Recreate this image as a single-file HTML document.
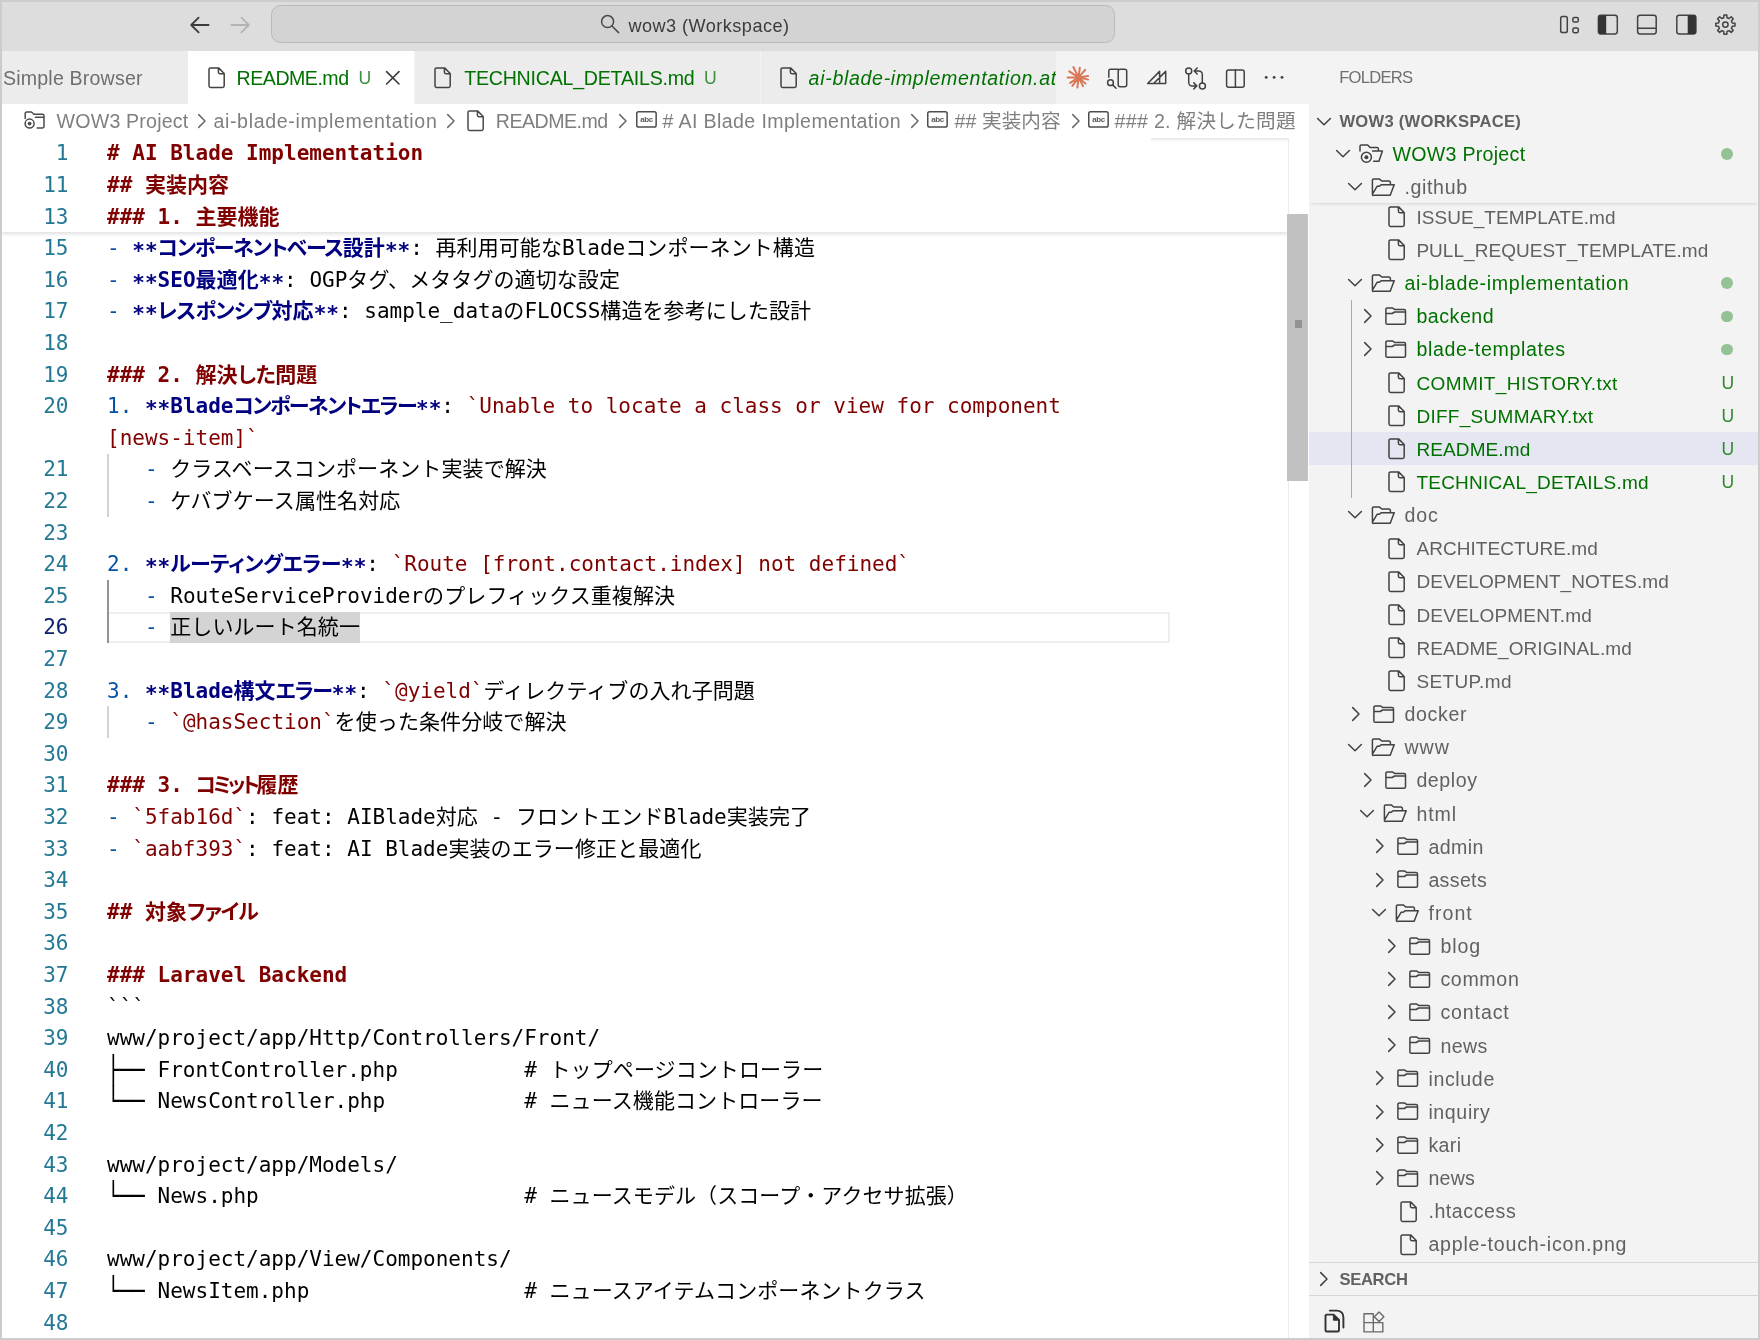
<!DOCTYPE html>
<html lang="ja"><head><meta charset="utf-8"><title>wow3 (Workspace)</title>
<style>
*{box-sizing:border-box;margin:0;padding:0}
html,body{width:1760px;height:1340px;overflow:hidden;background:#cccccc}
body{position:relative;font-family:"Liberation Sans", "Noto Sans CJK JP", sans-serif;color:#616161}
#win{will-change:transform;position:absolute;left:2px;top:2px;width:1756px;height:1336px;background:#fff;overflow:hidden}
#title{position:absolute;left:0;top:0;width:1756px;height:49px;background:#dddddd}
#cmd{position:absolute;left:269px;top:3.2px;width:844.2px;height:37.8px;border:1.5px solid #b9b9b9;border-radius:9.5px;background:#d3d3d3}
#cmdtxt{position:absolute;left:0;top:0;width:100%;height:100%;line-height:36px;font-size:18.1px;color:#3b3b3b;white-space:nowrap}
#tabs{position:absolute;left:0;top:49px;width:1306.5px;height:52.8px;background:#f3f3f3}
.tab{position:absolute;top:0;height:52.8px;background:#ececec;white-space:nowrap;font-size:19.6px;line-height:52.5px;color:#007100}
.tab.active{background:#fff}
.tab span{position:absolute;top:1px;white-space:pre}
#crumbs{position:absolute;left:0;top:101.8px;width:1306.5px;height:33.7px;background:#fff;font-size:19.6px;line-height:34px;color:#7f7f7f;white-space:nowrap}
#crumbs span{position:absolute;top:0;white-space:pre}
#side{position:absolute;left:1306.5px;top:49px;width:449.5px;height:1287px;background:#f3f3f3;overflow:hidden}
#editor{position:absolute;left:0;top:135.5px;width:1306.5px;height:1201px;background:#fff;overflow:hidden;font-family:"DejaVu Sans Mono", "Liberation Mono", "Noto Sans CJK JP", monospace;font-size:21.0px}
.ln{position:absolute;left:0;width:66.5px;text-align:right;color:#237893;height:31.6px;line-height:31.6px;white-space:pre}
.ln.cur{color:#0b216f}
.cl{position:absolute;left:105.0px;height:31.6px;line-height:31.6px;white-space:pre;color:#000}
.h{color:#800000;font-weight:bold}
.b{color:#000080;font-weight:bold}
.p{color:#0451a5}
.c{color:#800000}
.j{letter-spacing:0.09px}
.as{position:relative;top:3px}
.bx{display:inline-block;transform:scaleY(1.265);transform-origin:50% 16.2px}
.row{position:absolute;left:0;width:450px;height:33.15px;line-height:33px;font-size:19.6px;white-space:nowrap;color:#616161}
.row span{position:absolute;top:1px;white-space:pre}
.row.g{color:#007100}
.hd{position:absolute;left:0;width:450px;height:33px;line-height:33px;font-size:16.6px;font-weight:bold;color:#616161;white-space:nowrap}
.hd span{position:absolute;top:0.5px;white-space:pre}
svg{position:absolute;overflow:visible}
.i{fill:none;stroke:#424242;stroke-width:1.5;stroke-linejoin:round;stroke-linecap:round}
</style></head>
<body>
<div id="win">
<div id="title">
<svg style="left:187.0px;top:13.0px" width="22" height="20"><path d="M19.6 10H2.6M9.6 2.6L2.2 10L9.6 17.4" fill="none" stroke="#3b3b3b" stroke-width="1.8" stroke-linecap="round" stroke-linejoin="round"/></svg>
<svg style="left:226.5px;top:13.0px" width="22" height="20"><path d="M2.4 10H19.4M12.4 2.6L19.8 10L12.4 17.4" fill="none" stroke="#b4b4b4" stroke-width="1.8" stroke-linecap="round" stroke-linejoin="round"/></svg>
<div id="cmd"><div id="cmdtxt"><svg style="left:327.8px;top:8.0px" width="22" height="22"><circle cx="7.6" cy="7.6" r="6" fill="none" stroke="#4a4a4a" stroke-width="1.5"/><path d="M12 12L18.6 18.6" stroke="#4a4a4a" stroke-width="1.5" stroke-linecap="round"/></svg><span style="position:absolute;left:356.5px;top:1.5px;letter-spacing:0.466px">wow3 (Workspace)</span></div></div>
<svg style="left:0;top:0" width="1756" height="49"><rect class="i" x="1558.7" y="14.6" width="6.6" height="16.0" rx="1.8" /><rect class="i" x="1570.9" y="15.4" width="5.4" height="4.7" rx="1.4" /><rect class="i" x="1570.9" y="26.0" width="5.4" height="4.7" rx="1.4" /><rect class="i" x="1596.4" y="13.2" width="18.9" height="18.8" rx="2.4" /><path d="M1598.8 13.2h5.4v18.8h-5.4a2.4 2.4 0 0 1 -2.4 -2.4v-14a2.4 2.4 0 0 1 2.4 -2.4z" fill="#333"/><rect class="i" x="1635.6" y="13.2" width="18.6" height="18.8" rx="2.4" /><path class="i" d="M1635.6 26.3h18.6"/><rect class="i" x="1674.8" y="13.2" width="19.1" height="18.8" rx="2.4" /><path d="M1685.7 13.2h5.8a2.4 2.4 0 0 1 2.4 2.4v14a2.4 2.4 0 0 1 -2.4 2.4h-5.8z" fill="#333"/><path class="i" d="M1721.74 15.70 L1721.97 13.01 L1724.83 13.01 L1725.06 15.70 L1727.11 16.55 L1729.17 14.80 L1731.20 16.83 L1729.45 18.89 L1730.30 20.94 L1732.99 21.17 L1732.99 24.03 L1730.30 24.26 L1729.45 26.31 L1731.20 28.37 L1729.17 30.40 L1727.11 28.65 L1725.06 29.50 L1724.83 32.19 L1721.97 32.19 L1721.74 29.50 L1719.69 28.65 L1717.63 30.40 L1715.60 28.37 L1717.35 26.31 L1716.50 24.26 L1713.81 24.03 L1713.81 21.17 L1716.50 20.94 L1717.35 18.89 L1715.60 16.83 L1717.63 14.80 L1719.69 16.55Z"/><circle class="i" cx="1723.4" cy="22.6" r="2.7"/></svg>
</div>
<div id="tabs">
<div class="tab" style="left:0;width:185.5px;color:#6e6e6e"><span style="left:1.0px;letter-spacing:0.177px">Simple Browser</span></div>
<div class="tab active" style="left:185.5px;width:226.2px"></div>
<div class="tab" style="left:412.7px;width:345.3px"></div>
<div class="tab" style="left:759px;width:294.6px"></div>
<div class="tab" style="left:0;width:1053.6px;background:none;overflow:hidden"><svg style="left:205.60px;top:15.95px" width="18" height="22"><path class="i" style="stroke:#424242" d="M2.6 0.9H10.6L16.2 6.5V18.8A1.6 1.6 0 0 1 14.6 20.4H2.6A1.6 1.6 0 0 1 1 18.8V2.5A1.6 1.6 0 0 1 2.6 0.9ZM10.4 1.1V5.3A1.4 1.4 0 0 0 11.8 6.7H16"/></svg><span style="left:234.6px;letter-spacing:-0.500px">README.md</span><span style="left:356.6px;font-size:17.6px;color:#3f8f3f">U</span><svg style="left:383.0px;top:18.8px" width="16" height="16"><path class="i" style="stroke:#3b3b3b;stroke-width:1.6" d="M1.6 1.6L14 14M14 1.6L1.6 14"/></svg><svg style="left:431.90px;top:15.95px" width="18" height="22"><path class="i" style="stroke:#424242" d="M2.6 0.9H10.6L16.2 6.5V18.8A1.6 1.6 0 0 1 14.6 20.4H2.6A1.6 1.6 0 0 1 1 18.8V2.5A1.6 1.6 0 0 1 2.6 0.9ZM10.4 1.1V5.3A1.4 1.4 0 0 0 11.8 6.7H16"/></svg><span style="left:462.2px;letter-spacing:-0.228px">TECHNICAL_DETAILS.md</span><span style="left:702.0px;font-size:17.6px;color:#3f8f3f">U</span><svg style="left:778.20px;top:15.95px" width="18" height="22"><path class="i" style="stroke:#424242" d="M2.6 0.9H10.6L16.2 6.5V18.8A1.6 1.6 0 0 1 14.6 20.4H2.6A1.6 1.6 0 0 1 1 18.8V2.5A1.6 1.6 0 0 1 2.6 0.9ZM10.4 1.1V5.3A1.4 1.4 0 0 0 11.8 6.7H16"/></svg><span style="left:806.6px;font-style:italic;letter-spacing:0.669px">ai-blade-implementation.at</span></div>
<svg style="left:0;top:0" width="1306" height="52.5"><path d="M1076.60 26.40L1086.11 25.06M1076.60 26.40L1086.15 28.60M1076.60 26.40L1083.51 32.62M1076.60 26.40L1081.05 35.13M1076.60 26.40L1075.36 36.52M1076.60 26.40L1070.43 34.89M1076.60 26.40L1068.21 31.85M1076.60 26.40L1065.60 26.40M1076.60 26.40L1067.21 20.30M1076.60 26.40L1071.33 16.06M1076.60 26.40L1077.79 16.67M1076.60 26.40L1083.16 18.85" stroke="#d97757" stroke-width="2" stroke-linecap="round" fill="none"/><circle cx="1076.60" cy="26.40" r="2.6" fill="#d97757"/><path class="i" d="M1106.8 26.2V19.9a1.6 1.6 0 0 1 1.6 -1.6H1116.2"/><rect class="i" x="1116.2" y="18.3" width="8.5" height="17.5" rx="2.0" /><circle class="i" cx="1108.5" cy="31.7" r="2.9"/><path class="i" d="M1110.7 33.9L1114.0 37.2"/><path class="i" d="M1145.6 32.5L1157.6 20.4V32.5ZM1151.6 32.5L1163.7 20.4V32.5H1157.6"/><circle class="i" cx="1186.7" cy="20.1" r="3.0"/><circle class="i" cx="1200.4" cy="35.0" r="3.0"/><path class="i" d="M1186.7 22.9v8.6a3.4 3.4 0 0 0 3.4 3.4h4.6M1191.8 31.9l3 3l-3 3"/><path class="i" d="M1200.3 32.0v-8.6a3.4 3.4 0 0 0 -3.4 -3.4h-4.6M1195.2 23.0l-3 -3l3 -3"/><rect class="i" x="1224.6" y="18.9" width="17.6" height="17.4" rx="2.0" /><path class="i" d="M1233.4 18.9v17.4"/><circle cx="1264.2" cy="26.4" r="1.45" fill="#424242"/><circle cx="1272.1" cy="26.4" r="1.45" fill="#424242"/><circle cx="1280.0" cy="26.4" r="1.45" fill="#424242"/></svg>
</div>
<div id="crumbs">
<svg style="left:22.4px;top:7.5px" width="24" height="19"><path class="i" style="stroke:#4a4a4a" d="M1.2 7.6V2.4A1.4 1.4 0 0 1 2.6 1H7.4L10 3.3H18.6A1.4 1.4 0 0 1 20 4.7V15.6A1.4 1.4 0 0 1 18.6 17H13.2M11.4 6.2H20"/><circle class="i" style="stroke:#4a4a4a" cx="5.6" cy="12.6" r="4.5"/><circle cx="5.6" cy="12.6" r="1.9" fill="#4a4a4a"/></svg><span style="left:54.6px;letter-spacing:0.185px">WOW3 Project</span><svg style="left:195.20px;top:9.20px" width="10" height="16"><path class="i" style="stroke:#6a6a6a" d="M1.7 1.6L8 8L1.7 14.4"/></svg><span style="left:211.4px;letter-spacing:0.649px">ai-blade-implementation</span><svg style="left:444.40px;top:9.20px" width="10" height="16"><path class="i" style="stroke:#6a6a6a" d="M1.7 1.6L8 8L1.7 14.4"/></svg><svg style="left:464.50px;top:5.95px" width="18" height="22"><path class="i" style="stroke:#4a4a4a" d="M2.6 0.9H10.6L16.2 6.5V18.8A1.6 1.6 0 0 1 14.6 20.4H2.6A1.6 1.6 0 0 1 1 18.8V2.5A1.6 1.6 0 0 1 2.6 0.9ZM10.4 1.1V5.3A1.4 1.4 0 0 0 11.8 6.7H16"/></svg><span style="left:493.8px;letter-spacing:-0.525px">README.md</span><svg style="left:615.60px;top:9.20px" width="10" height="16"><path class="i" style="stroke:#6a6a6a" d="M1.7 1.6L8 8L1.7 14.4"/></svg><svg style="left:633.7px;top:7.4px" width="22" height="18"><rect class="i" style="stroke:#4d4d4d;stroke-width:1.5" x="0.75" y="0.75" width="19.4" height="15.2" rx="1.8"/><text x="10.5" y="10.6" text-anchor="middle" font-family="Liberation Sans, sans-serif" font-size="8" font-weight="bold" letter-spacing="-0.35" fill="#5a5a5a">abc</text></svg><span style="left:660.4px;letter-spacing:0.394px"># AI Blade Implementation</span><svg style="left:907.80px;top:9.20px" width="10" height="16"><path class="i" style="stroke:#6a6a6a" d="M1.7 1.6L8 8L1.7 14.4"/></svg><svg style="left:925.2px;top:7.4px" width="22" height="18"><rect class="i" style="stroke:#4d4d4d;stroke-width:1.5" x="0.75" y="0.75" width="19.4" height="15.2" rx="1.8"/><text x="10.5" y="10.6" text-anchor="middle" font-family="Liberation Sans, sans-serif" font-size="8" font-weight="bold" letter-spacing="-0.35" fill="#5a5a5a">abc</text></svg><span style="left:952.6px;letter-spacing:0.062px">## 実装内容</span><svg style="left:1069.00px;top:9.20px" width="10" height="16"><path class="i" style="stroke:#6a6a6a" d="M1.7 1.6L8 8L1.7 14.4"/></svg><svg style="left:1086.2px;top:7.4px" width="22" height="18"><rect class="i" style="stroke:#4d4d4d;stroke-width:1.5" x="0.75" y="0.75" width="19.4" height="15.2" rx="1.8"/><text x="10.5" y="10.6" text-anchor="middle" font-family="Liberation Sans, sans-serif" font-size="8" font-weight="bold" letter-spacing="-0.35" fill="#5a5a5a">abc</text></svg><span style="left:1112.6px;letter-spacing:0.293px">### 2. 解決した問題</span></div>
<div id="editor">
<div style="position:absolute;left:105.0px;top:474.00px;width:1063px;height:31.40px;border:2px solid #eeeeee"></div>
<div style="position:absolute;left:105.0px;top:316.00px;width:1.5px;height:63.20px;background:#d3d3d3"></div>
<div style="position:absolute;left:105.0px;top:442.40px;width:1.5px;height:63.20px;background:#939393"></div>
<div style="position:absolute;left:105.0px;top:568.80px;width:1.5px;height:31.60px;background:#d3d3d3"></div>
<div class="ln" style="top:95.75px">15</div><div class="cl" style="top:95.75px"><span class="p">- </span><span class="b"><span class="as">**</span><span style="font-feature-settings:&quot;palt&quot;;letter-spacing:-1.279px">コンポーネントベース</span><span class="j">設計</span><span class="as">**</span></span>: <span class="j">再利用可能な</span>Blade<span class="j">コンポーネント構造</span></div>
<div class="ln" style="top:127.35px">16</div><div class="cl" style="top:127.35px"><span class="p">- </span><span class="b"><span class="as">**</span>SEO<span class="j">最適化</span><span class="as">**</span></span>: OGP<span class="j">タグ、メタタグの適切な設定</span></div>
<div class="ln" style="top:158.95px">17</div><div class="cl" style="top:158.95px"><span class="p">- </span><span class="b"><span class="as">**</span><span style="font-feature-settings:&quot;palt&quot;;letter-spacing:-0.657px">レスポンシブ</span><span class="j">対応</span><span class="as">**</span></span>: sample_data<span class="j">の</span>FLOCSS<span class="j">構造を参考にした設計</span></div>
<div class="ln" style="top:190.55px">18</div>
<div class="ln" style="top:222.15px">19</div><div class="cl" style="top:222.15px"><span class="h">### 2. <span class="j">解決</span><span style="font-feature-settings:&quot;palt&quot;;letter-spacing:-0.523px">した</span><span class="j">問題</span></span></div>
<div class="ln" style="top:253.75px">20</div><div class="cl" style="top:253.75px"><span class="p">1. </span><span class="b"><span class="as">**</span>Blade<span style="font-feature-settings:&quot;palt&quot;;letter-spacing:-1.529px">コンポーネントエラー</span><span class="as">**</span></span>: <span class="c">`Unable to locate a class or view for component</span></div>
<div class="cl" style="top:285.35px"><span class="c">[news-item]`</span></div>
<div class="ln" style="top:316.95px">21</div><div class="cl" style="top:316.95px">   <span class="p">- </span><span class="j">クラスベースコンポーネント実装で解決</span></div>
<div class="ln" style="top:348.55px">22</div><div class="cl" style="top:348.55px">   <span class="p">- </span><span class="j">ケバブケース属性名対応</span></div>
<div class="ln" style="top:380.15px">23</div>
<div class="ln" style="top:411.75px">24</div><div class="cl" style="top:411.75px"><span class="p">2. </span><span class="b"><span class="as">**</span><span style="font-feature-settings:&quot;palt&quot;;letter-spacing:-0.422px">ルーティングエラー</span><span class="as">**</span></span>: <span class="c">`Route [front.contact.index] not defined`</span></div>
<div class="ln" style="top:443.35px">25</div><div class="cl" style="top:443.35px">   <span class="p">- </span>RouteServiceProvider<span class="j">のプレフィックス重複解決</span></div>
<div class="ln cur" style="top:474.95px">26</div><div class="cl" style="top:474.95px">   <span class="p">- </span><span style="background:#d4d4d4;display:inline-block;height:31px;vertical-align:top"><span class="j">正しいルート名統一</span></span></div>
<div class="ln" style="top:506.55px">27</div>
<div class="ln" style="top:538.15px">28</div><div class="cl" style="top:538.15px"><span class="p">3. </span><span class="b"><span class="as">**</span>Blade<span class="j">構文</span><span style="font-feature-settings:&quot;palt&quot;;letter-spacing:-1.201px">エラー</span><span class="as">**</span></span>: <span class="c">`@yield`</span><span class="j">ディレクティブの入れ子問題</span></div>
<div class="ln" style="top:569.75px">29</div><div class="cl" style="top:569.75px">   <span class="p">- </span><span class="c">`@hasSection`</span><span class="j">を使った条件分岐で解決</span></div>
<div class="ln" style="top:601.35px">30</div>
<div class="ln" style="top:632.95px">31</div><div class="cl" style="top:632.95px"><span class="h">### 3. <span style="font-feature-settings:&quot;palt&quot;;letter-spacing:-3.395px">コミット</span><span class="j">履歴</span></span></div>
<div class="ln" style="top:664.55px">32</div><div class="cl" style="top:664.55px"><span class="p">- </span><span class="c">`5fab16d`</span>: feat: AIBlade<span class="j">対応</span> - <span class="j">フロントエンド</span>Blade<span class="j">実装完了</span></div>
<div class="ln" style="top:696.15px">33</div><div class="cl" style="top:696.15px"><span class="p">- </span><span class="c">`aabf393`</span>: feat: AI Blade<span class="j">実装のエラー修正と最適化</span></div>
<div class="ln" style="top:727.75px">34</div>
<div class="ln" style="top:759.35px">35</div><div class="cl" style="top:759.35px"><span class="h">## <span class="j">対象</span><span style="font-feature-settings:&quot;palt&quot;;letter-spacing:-1.073px">ファイル</span></span></div>
<div class="ln" style="top:790.95px">36</div>
<div class="ln" style="top:822.55px">37</div><div class="cl" style="top:822.55px"><span class="h">### Laravel Backend</span></div>
<div class="ln" style="top:854.15px">38</div><div class="cl" style="top:854.15px">```</div>
<div class="ln" style="top:885.75px">39</div><div class="cl" style="top:885.75px">www/project/app/Http/Controllers/Front/</div>
<div class="ln" style="top:917.35px">40</div><div class="cl" style="top:917.35px"><span class="bx">├──</span> FrontController.php          # <span class="j">トップページコントローラー</span></div>
<div class="ln" style="top:948.95px">41</div><div class="cl" style="top:948.95px"><span class="bx">└──</span> NewsController.php           # <span class="j">ニュース機能コントローラー</span></div>
<div class="ln" style="top:980.55px">42</div>
<div class="ln" style="top:1012.15px">43</div><div class="cl" style="top:1012.15px">www/project/app/Models/</div>
<div class="ln" style="top:1043.75px">44</div><div class="cl" style="top:1043.75px"><span class="bx">└──</span> News.php                     # <span class="j">ニュースモデル（スコープ・アクセサ拡張）</span></div>
<div class="ln" style="top:1075.35px">45</div>
<div class="ln" style="top:1106.95px">46</div><div class="cl" style="top:1106.95px">www/project/app/View/Components/</div>
<div class="ln" style="top:1138.55px">47</div><div class="cl" style="top:1138.55px"><span class="bx">└──</span> NewsItem.php                 # <span class="j">ニュースアイテムコンポーネントクラス</span></div>
<div class="ln" style="top:1170.15px">48</div>
<div style="position:absolute;left:0;top:0;width:1285.5px;height:94.10px;background:#fff;box-shadow:0 2px 4px rgba(0,0,0,0.13)">
<div class="ln" style="top:0.50px">1</div><div class="cl" style="top:0.50px"><span class="h"># AI Blade Implementation</span></div>
<div class="ln" style="top:32.25px">11</div><div class="cl" style="top:32.25px"><span class="h">## 実装内容</span></div>
<div class="ln" style="top:64.00px">13</div><div class="cl" style="top:64.00px"><span class="h">### 1. 主要機能</span></div>
</div>
<div style="position:absolute;left:1149px;top:0;width:136.5px;height:4px;background:linear-gradient(rgba(0,0,0,0.10),rgba(0,0,0,0))"></div>
<div style="position:absolute;left:1285.5px;top:0;width:21px;height:1201px;background:#fff;border-left:1px solid #ebebeb"></div>
<div style="position:absolute;left:1285.3px;top:76.2px;width:20.7px;height:267.6px;background:#c1c1c1"></div>
<div style="position:absolute;left:1292.7px;top:182.7px;width:7px;height:7.4px;background:#929292"></div>
</div>
<div id="side">
<div style="position:absolute;left:30.7px;top:10.0px;font-size:16.6px;line-height:33px;color:#6f6f6f;white-space:pre"><span style=";letter-spacing:-0.729px">FOLDERS</span></div>
<div class="row" style="top:148.8px"><svg style="left:79.30px;top:6.22px" width="18" height="22"><path class="i" style="stroke:#424242" d="M2.6 0.9H10.6L16.2 6.5V18.8A1.6 1.6 0 0 1 14.6 20.4H2.6A1.6 1.6 0 0 1 1 18.8V2.5A1.6 1.6 0 0 1 2.6 0.9ZM10.4 1.1V5.3A1.4 1.4 0 0 0 11.8 6.7H16"/></svg><span style="left:107.9px;font-size:19px;letter-spacing:0.059px">ISSUE_TEMPLATE.md</span></div>
<div class="row" style="top:181.9px"><svg style="left:79.30px;top:6.22px" width="18" height="22"><path class="i" style="stroke:#424242" d="M2.6 0.9H10.6L16.2 6.5V18.8A1.6 1.6 0 0 1 14.6 20.4H2.6A1.6 1.6 0 0 1 1 18.8V2.5A1.6 1.6 0 0 1 2.6 0.9ZM10.4 1.1V5.3A1.4 1.4 0 0 0 11.8 6.7H16"/></svg><span style="left:107.9px;font-size:19px;letter-spacing:0.036px">PULL_REQUEST_TEMPLATE.md</span></div>
<div class="row g" style="top:215.1px"><svg style="left:38.30px;top:12.38px" width="16" height="10"><path class="i" style="stroke:#424242" d="M1.6 1.5L8 7.8L14.4 1.5"/></svg><svg style="left:62.70px;top:7.67px" width="25" height="19"><path class="i" style="stroke:#424242" d="M1.4 15.6V2.3A1.4 1.4 0 0 1 2.8 0.9H8.2L10.8 3H18A1.4 1.4 0 0 1 19.4 4.4V6.6M3 17.2H19.2L23.2 6.7H10.4L8 8.3H6.1L1.4 16.2A1 1 0 0 0 3 17.2Z"/></svg><span style="left:95.9px;letter-spacing:0.685px">ai-blade-implementation</span><div style="position:absolute;left:412.8px;top:11.4px;width:11.4px;height:11.4px;border-radius:6px;background:#94c294"></div></div>
<div class="row g" style="top:248.2px"><svg style="left:54.40px;top:8.77px" width="10" height="16"><path class="i" style="stroke:#424242" d="M1.7 1.6L8 8L1.7 14.4"/></svg><svg style="left:76.20px;top:7.67px" width="22" height="19"><path class="i" style="stroke:#424242" d="M2.3 0.9H7.4L9.6 2.4H19.1A1.4 1.4 0 0 1 20.5 3.8V15.9A1.4 1.4 0 0 1 19.1 17.3H2.3A1.4 1.4 0 0 1 0.9 15.9V2.3A1.4 1.4 0 0 1 2.3 0.9ZM0.9 6.5H7.2L9.6 5H20.5"/></svg><span style="left:107.9px;letter-spacing:0.534px">backend</span><div style="position:absolute;left:412.8px;top:11.4px;width:11.4px;height:11.4px;border-radius:6px;background:#94c294"></div></div>
<div class="row g" style="top:281.4px"><svg style="left:54.40px;top:8.77px" width="10" height="16"><path class="i" style="stroke:#424242" d="M1.7 1.6L8 8L1.7 14.4"/></svg><svg style="left:76.20px;top:7.67px" width="22" height="19"><path class="i" style="stroke:#424242" d="M2.3 0.9H7.4L9.6 2.4H19.1A1.4 1.4 0 0 1 20.5 3.8V15.9A1.4 1.4 0 0 1 19.1 17.3H2.3A1.4 1.4 0 0 1 0.9 15.9V2.3A1.4 1.4 0 0 1 2.3 0.9ZM0.9 6.5H7.2L9.6 5H20.5"/></svg><span style="left:107.9px;letter-spacing:0.663px">blade-templates</span><div style="position:absolute;left:412.8px;top:11.4px;width:11.4px;height:11.4px;border-radius:6px;background:#94c294"></div></div>
<div class="row g" style="top:314.5px"><svg style="left:79.30px;top:6.22px" width="18" height="22"><path class="i" style="stroke:#424242" d="M2.6 0.9H10.6L16.2 6.5V18.8A1.6 1.6 0 0 1 14.6 20.4H2.6A1.6 1.6 0 0 1 1 18.8V2.5A1.6 1.6 0 0 1 2.6 0.9ZM10.4 1.1V5.3A1.4 1.4 0 0 0 11.8 6.7H16"/></svg><span style="left:107.9px;font-size:19px;letter-spacing:0.396px">COMMIT_HISTORY.txt</span><span style="left:413.1px;font-size:17.5px;color:#2c8a2c">U</span></div>
<div class="row g" style="top:347.7px"><svg style="left:79.30px;top:6.22px" width="18" height="22"><path class="i" style="stroke:#424242" d="M2.6 0.9H10.6L16.2 6.5V18.8A1.6 1.6 0 0 1 14.6 20.4H2.6A1.6 1.6 0 0 1 1 18.8V2.5A1.6 1.6 0 0 1 2.6 0.9ZM10.4 1.1V5.3A1.4 1.4 0 0 0 11.8 6.7H16"/></svg><span style="left:107.9px;font-size:19px;letter-spacing:0.283px">DIFF_SUMMARY.txt</span><span style="left:413.1px;font-size:17.5px;color:#2c8a2c">U</span></div>
<div class="row g" style="top:380.8px;background:#e4e6f1"><svg style="left:79.30px;top:6.22px" width="18" height="22"><path class="i" style="stroke:#424242" d="M2.6 0.9H10.6L16.2 6.5V18.8A1.6 1.6 0 0 1 14.6 20.4H2.6A1.6 1.6 0 0 1 1 18.8V2.5A1.6 1.6 0 0 1 2.6 0.9ZM10.4 1.1V5.3A1.4 1.4 0 0 0 11.8 6.7H16"/></svg><span style="left:107.9px;font-size:19px;letter-spacing:0.116px">README.md</span><span style="left:413.1px;font-size:17.5px;color:#2c8a2c">U</span></div>
<div class="row g" style="top:414.0px"><svg style="left:79.30px;top:6.22px" width="18" height="22"><path class="i" style="stroke:#424242" d="M2.6 0.9H10.6L16.2 6.5V18.8A1.6 1.6 0 0 1 14.6 20.4H2.6A1.6 1.6 0 0 1 1 18.8V2.5A1.6 1.6 0 0 1 2.6 0.9ZM10.4 1.1V5.3A1.4 1.4 0 0 0 11.8 6.7H16"/></svg><span style="left:107.9px;font-size:19px;letter-spacing:0.242px">TECHNICAL_DETAILS.md</span><span style="left:413.1px;font-size:17.5px;color:#2c8a2c">U</span></div>
<div class="row" style="top:447.1px"><svg style="left:38.30px;top:12.38px" width="16" height="10"><path class="i" style="stroke:#424242" d="M1.6 1.5L8 7.8L14.4 1.5"/></svg><svg style="left:62.70px;top:7.67px" width="25" height="19"><path class="i" style="stroke:#424242" d="M1.4 15.6V2.3A1.4 1.4 0 0 1 2.8 0.9H8.2L10.8 3H18A1.4 1.4 0 0 1 19.4 4.4V6.6M3 17.2H19.2L23.2 6.7H10.4L8 8.3H6.1L1.4 16.2A1 1 0 0 0 3 17.2Z"/></svg><span style="left:95.9px;letter-spacing:0.903px">doc</span></div>
<div class="row" style="top:480.3px"><svg style="left:79.30px;top:6.22px" width="18" height="22"><path class="i" style="stroke:#424242" d="M2.6 0.9H10.6L16.2 6.5V18.8A1.6 1.6 0 0 1 14.6 20.4H2.6A1.6 1.6 0 0 1 1 18.8V2.5A1.6 1.6 0 0 1 2.6 0.9ZM10.4 1.1V5.3A1.4 1.4 0 0 0 11.8 6.7H16"/></svg><span style="left:107.9px;font-size:19px;letter-spacing:0.063px">ARCHITECTURE.md</span></div>
<div class="row" style="top:513.4px"><svg style="left:79.30px;top:6.22px" width="18" height="22"><path class="i" style="stroke:#424242" d="M2.6 0.9H10.6L16.2 6.5V18.8A1.6 1.6 0 0 1 14.6 20.4H2.6A1.6 1.6 0 0 1 1 18.8V2.5A1.6 1.6 0 0 1 2.6 0.9ZM10.4 1.1V5.3A1.4 1.4 0 0 0 11.8 6.7H16"/></svg><span style="left:107.9px;font-size:19px;letter-spacing:0.059px">DEVELOPMENT_NOTES.md</span></div>
<div class="row" style="top:546.6px"><svg style="left:79.30px;top:6.22px" width="18" height="22"><path class="i" style="stroke:#424242" d="M2.6 0.9H10.6L16.2 6.5V18.8A1.6 1.6 0 0 1 14.6 20.4H2.6A1.6 1.6 0 0 1 1 18.8V2.5A1.6 1.6 0 0 1 2.6 0.9ZM10.4 1.1V5.3A1.4 1.4 0 0 0 11.8 6.7H16"/></svg><span style="left:107.9px;font-size:19px;letter-spacing:0.173px">DEVELOPMENT.md</span></div>
<div class="row" style="top:579.7px"><svg style="left:79.30px;top:6.22px" width="18" height="22"><path class="i" style="stroke:#424242" d="M2.6 0.9H10.6L16.2 6.5V18.8A1.6 1.6 0 0 1 14.6 20.4H2.6A1.6 1.6 0 0 1 1 18.8V2.5A1.6 1.6 0 0 1 2.6 0.9ZM10.4 1.1V5.3A1.4 1.4 0 0 0 11.8 6.7H16"/></svg><span style="left:107.9px;font-size:19px;letter-spacing:0.063px">README_ORIGINAL.md</span></div>
<div class="row" style="top:612.9px"><svg style="left:79.30px;top:6.22px" width="18" height="22"><path class="i" style="stroke:#424242" d="M2.6 0.9H10.6L16.2 6.5V18.8A1.6 1.6 0 0 1 14.6 20.4H2.6A1.6 1.6 0 0 1 1 18.8V2.5A1.6 1.6 0 0 1 2.6 0.9ZM10.4 1.1V5.3A1.4 1.4 0 0 0 11.8 6.7H16"/></svg><span style="left:107.9px;font-size:19px;letter-spacing:0.360px">SETUP.md</span></div>
<div class="row" style="top:646.0px"><svg style="left:42.40px;top:8.77px" width="10" height="16"><path class="i" style="stroke:#424242" d="M1.7 1.6L8 8L1.7 14.4"/></svg><svg style="left:64.20px;top:7.67px" width="22" height="19"><path class="i" style="stroke:#424242" d="M2.3 0.9H7.4L9.6 2.4H19.1A1.4 1.4 0 0 1 20.5 3.8V15.9A1.4 1.4 0 0 1 19.1 17.3H2.3A1.4 1.4 0 0 1 0.9 15.9V2.3A1.4 1.4 0 0 1 2.3 0.9ZM0.9 6.5H7.2L9.6 5H20.5"/></svg><span style="left:95.9px;letter-spacing:0.677px">docker</span></div>
<div class="row" style="top:679.2px"><svg style="left:38.30px;top:12.38px" width="16" height="10"><path class="i" style="stroke:#424242" d="M1.6 1.5L8 7.8L14.4 1.5"/></svg><svg style="left:62.70px;top:7.67px" width="25" height="19"><path class="i" style="stroke:#424242" d="M1.4 15.6V2.3A1.4 1.4 0 0 1 2.8 0.9H8.2L10.8 3H18A1.4 1.4 0 0 1 19.4 4.4V6.6M3 17.2H19.2L23.2 6.7H10.4L8 8.3H6.1L1.4 16.2A1 1 0 0 0 3 17.2Z"/></svg><span style="left:95.9px;letter-spacing:0.973px">www</span></div>
<div class="row" style="top:712.3px"><svg style="left:54.40px;top:8.77px" width="10" height="16"><path class="i" style="stroke:#424242" d="M1.7 1.6L8 8L1.7 14.4"/></svg><svg style="left:76.20px;top:7.67px" width="22" height="19"><path class="i" style="stroke:#424242" d="M2.3 0.9H7.4L9.6 2.4H19.1A1.4 1.4 0 0 1 20.5 3.8V15.9A1.4 1.4 0 0 1 19.1 17.3H2.3A1.4 1.4 0 0 1 0.9 15.9V2.3A1.4 1.4 0 0 1 2.3 0.9ZM0.9 6.5H7.2L9.6 5H20.5"/></svg><span style="left:107.9px;letter-spacing:0.570px">deploy</span></div>
<div class="row" style="top:745.5px"><svg style="left:50.30px;top:12.38px" width="16" height="10"><path class="i" style="stroke:#424242" d="M1.6 1.5L8 7.8L14.4 1.5"/></svg><svg style="left:74.70px;top:7.67px" width="25" height="19"><path class="i" style="stroke:#424242" d="M1.4 15.6V2.3A1.4 1.4 0 0 1 2.8 0.9H8.2L10.8 3H18A1.4 1.4 0 0 1 19.4 4.4V6.6M3 17.2H19.2L23.2 6.7H10.4L8 8.3H6.1L1.4 16.2A1 1 0 0 0 3 17.2Z"/></svg><span style="left:107.9px;letter-spacing:0.890px">html</span></div>
<div class="row" style="top:778.6px"><svg style="left:66.40px;top:8.77px" width="10" height="16"><path class="i" style="stroke:#424242" d="M1.7 1.6L8 8L1.7 14.4"/></svg><svg style="left:88.20px;top:7.67px" width="22" height="19"><path class="i" style="stroke:#424242" d="M2.3 0.9H7.4L9.6 2.4H19.1A1.4 1.4 0 0 1 20.5 3.8V15.9A1.4 1.4 0 0 1 19.1 17.3H2.3A1.4 1.4 0 0 1 0.9 15.9V2.3A1.4 1.4 0 0 1 2.3 0.9ZM0.9 6.5H7.2L9.6 5H20.5"/></svg><span style="left:119.9px;letter-spacing:0.431px">admin</span></div>
<div class="row" style="top:811.8px"><svg style="left:66.40px;top:8.77px" width="10" height="16"><path class="i" style="stroke:#424242" d="M1.7 1.6L8 8L1.7 14.4"/></svg><svg style="left:88.20px;top:7.67px" width="22" height="19"><path class="i" style="stroke:#424242" d="M2.3 0.9H7.4L9.6 2.4H19.1A1.4 1.4 0 0 1 20.5 3.8V15.9A1.4 1.4 0 0 1 19.1 17.3H2.3A1.4 1.4 0 0 1 0.9 15.9V2.3A1.4 1.4 0 0 1 2.3 0.9ZM0.9 6.5H7.2L9.6 5H20.5"/></svg><span style="left:119.9px;letter-spacing:0.332px">assets</span></div>
<div class="row" style="top:844.9px"><svg style="left:62.30px;top:12.38px" width="16" height="10"><path class="i" style="stroke:#424242" d="M1.6 1.5L8 7.8L14.4 1.5"/></svg><svg style="left:86.70px;top:7.67px" width="25" height="19"><path class="i" style="stroke:#424242" d="M1.4 15.6V2.3A1.4 1.4 0 0 1 2.8 0.9H8.2L10.8 3H18A1.4 1.4 0 0 1 19.4 4.4V6.6M3 17.2H19.2L23.2 6.7H10.4L8 8.3H6.1L1.4 16.2A1 1 0 0 0 3 17.2Z"/></svg><span style="left:119.9px;letter-spacing:1.045px">front</span></div>
<div class="row" style="top:878.1px"><svg style="left:78.40px;top:8.77px" width="10" height="16"><path class="i" style="stroke:#424242" d="M1.7 1.6L8 8L1.7 14.4"/></svg><svg style="left:100.20px;top:7.67px" width="22" height="19"><path class="i" style="stroke:#424242" d="M2.3 0.9H7.4L9.6 2.4H19.1A1.4 1.4 0 0 1 20.5 3.8V15.9A1.4 1.4 0 0 1 19.1 17.3H2.3A1.4 1.4 0 0 1 0.9 15.9V2.3A1.4 1.4 0 0 1 2.3 0.9ZM0.9 6.5H7.2L9.6 5H20.5"/></svg><span style="left:131.9px;letter-spacing:0.884px">blog</span></div>
<div class="row" style="top:911.2px"><svg style="left:78.40px;top:8.77px" width="10" height="16"><path class="i" style="stroke:#424242" d="M1.7 1.6L8 8L1.7 14.4"/></svg><svg style="left:100.20px;top:7.67px" width="22" height="19"><path class="i" style="stroke:#424242" d="M2.3 0.9H7.4L9.6 2.4H19.1A1.4 1.4 0 0 1 20.5 3.8V15.9A1.4 1.4 0 0 1 19.1 17.3H2.3A1.4 1.4 0 0 1 0.9 15.9V2.3A1.4 1.4 0 0 1 2.3 0.9ZM0.9 6.5H7.2L9.6 5H20.5"/></svg><span style="left:131.9px;letter-spacing:0.652px">common</span></div>
<div class="row" style="top:944.4px"><svg style="left:78.40px;top:8.77px" width="10" height="16"><path class="i" style="stroke:#424242" d="M1.7 1.6L8 8L1.7 14.4"/></svg><svg style="left:100.20px;top:7.67px" width="22" height="19"><path class="i" style="stroke:#424242" d="M2.3 0.9H7.4L9.6 2.4H19.1A1.4 1.4 0 0 1 20.5 3.8V15.9A1.4 1.4 0 0 1 19.1 17.3H2.3A1.4 1.4 0 0 1 0.9 15.9V2.3A1.4 1.4 0 0 1 2.3 0.9ZM0.9 6.5H7.2L9.6 5H20.5"/></svg><span style="left:131.9px;letter-spacing:0.869px">contact</span></div>
<div class="row" style="top:977.5px"><svg style="left:78.40px;top:8.77px" width="10" height="16"><path class="i" style="stroke:#424242" d="M1.7 1.6L8 8L1.7 14.4"/></svg><svg style="left:100.20px;top:7.67px" width="22" height="19"><path class="i" style="stroke:#424242" d="M2.3 0.9H7.4L9.6 2.4H19.1A1.4 1.4 0 0 1 20.5 3.8V15.9A1.4 1.4 0 0 1 19.1 17.3H2.3A1.4 1.4 0 0 1 0.9 15.9V2.3A1.4 1.4 0 0 1 2.3 0.9ZM0.9 6.5H7.2L9.6 5H20.5"/></svg><span style="left:131.9px;letter-spacing:0.350px">news</span></div>
<div class="row" style="top:1010.7px"><svg style="left:66.40px;top:8.77px" width="10" height="16"><path class="i" style="stroke:#424242" d="M1.7 1.6L8 8L1.7 14.4"/></svg><svg style="left:88.20px;top:7.67px" width="22" height="19"><path class="i" style="stroke:#424242" d="M2.3 0.9H7.4L9.6 2.4H19.1A1.4 1.4 0 0 1 20.5 3.8V15.9A1.4 1.4 0 0 1 19.1 17.3H2.3A1.4 1.4 0 0 1 0.9 15.9V2.3A1.4 1.4 0 0 1 2.3 0.9ZM0.9 6.5H7.2L9.6 5H20.5"/></svg><span style="left:119.9px;letter-spacing:0.634px">include</span></div>
<div class="row" style="top:1043.8px"><svg style="left:66.40px;top:8.77px" width="10" height="16"><path class="i" style="stroke:#424242" d="M1.7 1.6L8 8L1.7 14.4"/></svg><svg style="left:88.20px;top:7.67px" width="22" height="19"><path class="i" style="stroke:#424242" d="M2.3 0.9H7.4L9.6 2.4H19.1A1.4 1.4 0 0 1 20.5 3.8V15.9A1.4 1.4 0 0 1 19.1 17.3H2.3A1.4 1.4 0 0 1 0.9 15.9V2.3A1.4 1.4 0 0 1 2.3 0.9ZM0.9 6.5H7.2L9.6 5H20.5"/></svg><span style="left:119.9px;letter-spacing:0.611px">inquiry</span></div>
<div class="row" style="top:1077.0px"><svg style="left:66.40px;top:8.77px" width="10" height="16"><path class="i" style="stroke:#424242" d="M1.7 1.6L8 8L1.7 14.4"/></svg><svg style="left:88.20px;top:7.67px" width="22" height="19"><path class="i" style="stroke:#424242" d="M2.3 0.9H7.4L9.6 2.4H19.1A1.4 1.4 0 0 1 20.5 3.8V15.9A1.4 1.4 0 0 1 19.1 17.3H2.3A1.4 1.4 0 0 1 0.9 15.9V2.3A1.4 1.4 0 0 1 2.3 0.9ZM0.9 6.5H7.2L9.6 5H20.5"/></svg><span style="left:119.9px;letter-spacing:0.374px">kari</span></div>
<div class="row" style="top:1110.1px"><svg style="left:66.40px;top:8.77px" width="10" height="16"><path class="i" style="stroke:#424242" d="M1.7 1.6L8 8L1.7 14.4"/></svg><svg style="left:88.20px;top:7.67px" width="22" height="19"><path class="i" style="stroke:#424242" d="M2.3 0.9H7.4L9.6 2.4H19.1A1.4 1.4 0 0 1 20.5 3.8V15.9A1.4 1.4 0 0 1 19.1 17.3H2.3A1.4 1.4 0 0 1 0.9 15.9V2.3A1.4 1.4 0 0 1 2.3 0.9ZM0.9 6.5H7.2L9.6 5H20.5"/></svg><span style="left:119.9px;letter-spacing:0.250px">news</span></div>
<div class="row" style="top:1143.3px"><svg style="left:91.30px;top:6.22px" width="18" height="22"><path class="i" style="stroke:#424242" d="M2.6 0.9H10.6L16.2 6.5V18.8A1.6 1.6 0 0 1 14.6 20.4H2.6A1.6 1.6 0 0 1 1 18.8V2.5A1.6 1.6 0 0 1 2.6 0.9ZM10.4 1.1V5.3A1.4 1.4 0 0 0 11.8 6.7H16"/></svg><span style="left:119.9px;letter-spacing:0.565px">.htaccess</span></div>
<div class="row" style="top:1176.4px"><svg style="left:91.30px;top:6.22px" width="18" height="22"><path class="i" style="stroke:#424242" d="M2.6 0.9H10.6L16.2 6.5V18.8A1.6 1.6 0 0 1 14.6 20.4H2.6A1.6 1.6 0 0 1 1 18.8V2.5A1.6 1.6 0 0 1 2.6 0.9ZM10.4 1.1V5.3A1.4 1.4 0 0 0 11.8 6.7H16"/></svg><span style="left:119.9px;letter-spacing:0.794px">apple-touch-icon.png</span></div>
<div style="position:absolute;left:42.0px;top:249.0px;width:1.5px;height:198.0px;background:#a9a9a9"></div>
<div style="position:absolute;left:0;top:86.0px;width:450px;height:66.3px;background:#f3f3f3;box-shadow:0 3px 3px -2px rgba(0,0,0,0.12)"></div>
<div class="row g" style="top:85.9px"><svg style="left:26.30px;top:12.38px" width="16" height="10"><path class="i" style="stroke:#424242" d="M1.6 1.5L8 7.8L14.4 1.5"/></svg><svg style="left:50.30px;top:7.38px" width="25" height="20"><path class="i" style="stroke:#424242" d="M1 7V2.4A1.4 1.4 0 0 1 2.4 1H8.6L11.3 3.6H18A1.4 1.4 0 0 1 19.4 5V7M13.6 7.1H23.4L19.9 17.2H14.6"/><circle class="i" style="stroke:#424242" cx="7.4" cy="13.3" r="5"/><circle cx="7.4" cy="13.3" r="2" fill="#424242"/></svg><span style="left:83.9px;letter-spacing:0.285px">WOW3 Project</span><div style="position:absolute;left:412.8px;top:11.4px;width:11.4px;height:11.4px;border-radius:6px;background:#94c294"></div></div>
<div class="row" style="top:118.9px"><svg style="left:38.30px;top:12.38px" width="16" height="10"><path class="i" style="stroke:#424242" d="M1.6 1.5L8 7.8L14.4 1.5"/></svg><svg style="left:62.70px;top:7.67px" width="25" height="19"><path class="i" style="stroke:#424242" d="M1.4 15.6V2.3A1.4 1.4 0 0 1 2.8 0.9H8.2L10.8 3H18A1.4 1.4 0 0 1 19.4 4.4V6.6M3 17.2H19.2L23.2 6.7H10.4L8 8.3H6.1L1.4 16.2A1 1 0 0 0 3 17.2Z"/></svg><span style="left:95.9px;letter-spacing:0.643px">.github</span></div>
<div class="hd" style="top:53.0px"><svg style="left:7.00px;top:12.60px" width="16" height="10"><path class="i" style="stroke:#424242" d="M1.6 1.5L8 7.8L14.4 1.5"/></svg><span style="left:30.9px;letter-spacing:0.259px">WOW3 (WORKSPACE)</span></div>
<div style="position:absolute;left:0;top:1210.7px;width:450px;height:1.5px;background:#d6d6d6"></div>
<div class="hd" style="top:1211.2px"><svg style="left:10.70px;top:9.00px" width="10" height="16"><path class="i" style="stroke:#424242" d="M1.7 1.6L8 8L1.7 14.4"/></svg><span style="left:30.9px;letter-spacing:-0.316px">SEARCH</span></div>
<div style="position:absolute;left:0;top:1243.5px;width:450px;height:1.5px;background:#d6d6d6"></div>
<svg style="left:15.5px;top:1258.0px" width="22" height="25"><path class="i" style="stroke:#333;stroke-width:1.9" d="M2.8 5.6H9.6L15 11V21.2A1.3 1.3 0 0 1 13.7 22.5H2.8A1.3 1.3 0 0 1 1.5 21.2V6.9A1.3 1.3 0 0 1 2.8 5.6Z"/><path d="M9.4 5.4V11.2H15.2Z" fill="#333" stroke="#333" stroke-width="1" stroke-linejoin="round"/><path class="i" style="stroke:#333;stroke-width:1.9" d="M5.8 1.6H13Q19.4 1.9 19.4 8.6V18.6"/></svg>
<svg style="left:54.5px;top:1260.0px" width="23" height="23"><path class="i" style="stroke:#6a6a6a;stroke-width:1.4" d="M1 2.7H10.3V20.9H1ZM1 11.6H19.8V20.9H10.3M16.1 0.9L20.9 5.7L16.1 10.5L11.3 5.7Z"/></svg>
</div>
</div>
</body></html>
